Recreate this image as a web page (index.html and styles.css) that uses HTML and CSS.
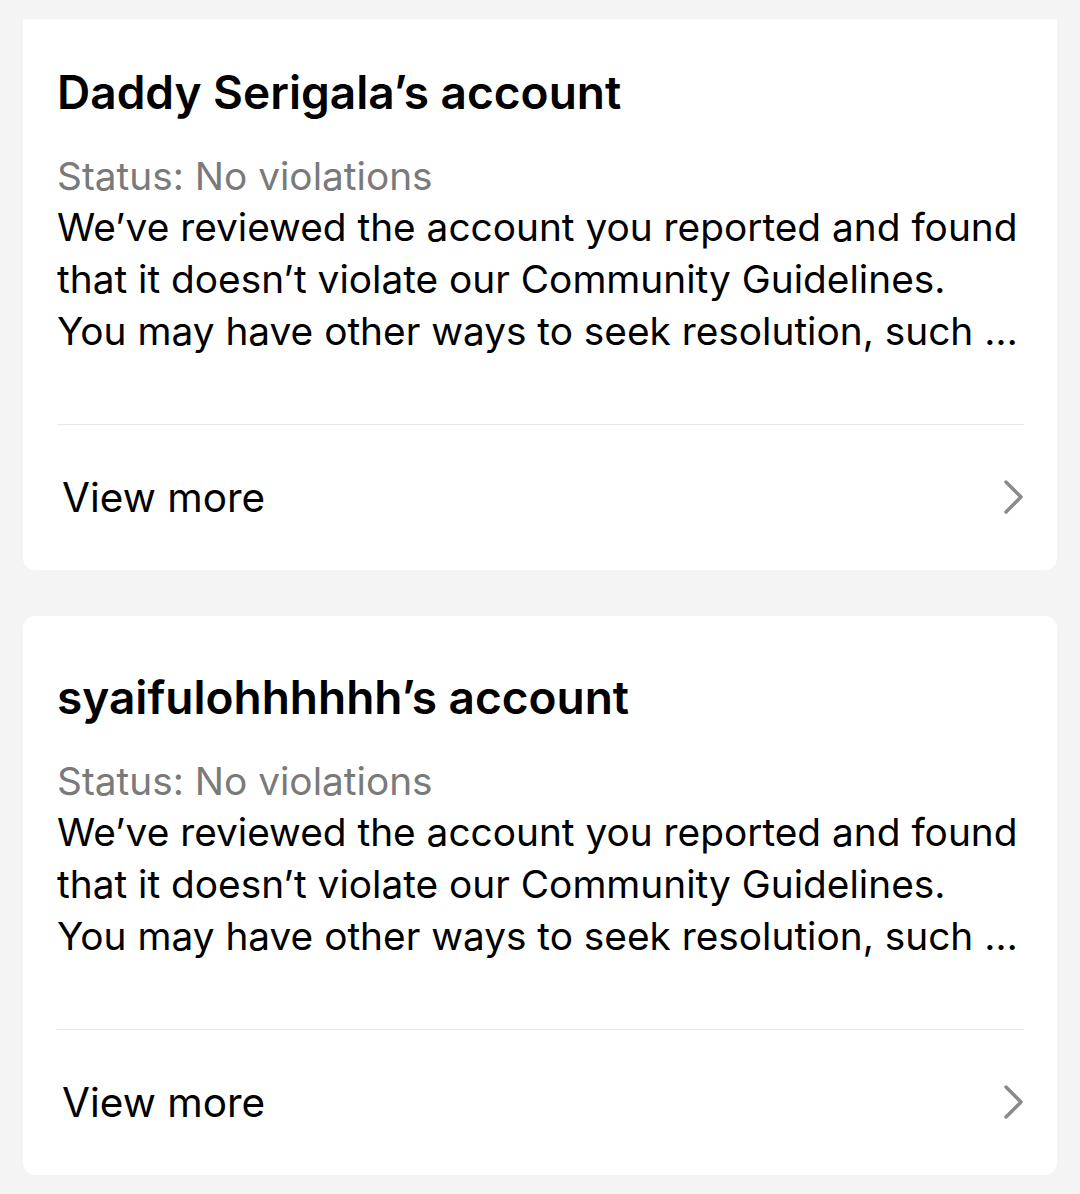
FILE: index.html
```html
<!DOCTYPE html>
<html lang="en">
<head>
    <meta charset="UTF-8">
    <meta name="viewport" content="width=device-width, initial-scale=1.0">
    <title>Reports</title>
    <link rel="stylesheet" href="styles.css">
</head>
<body>
    <div class="report-list">
        <div class="report-card report-card-cut">
            <h2 class="report-title">Daddy Serigala’s account</h2>
            <div class="report-status">Status: No violations</div>
            <p class="report-text">We’ve reviewed the account you reported and found that it doesn’t violate our Community Guidelines. You may have other ways to seek resolution, such …</p>
            <a class="report-more" href="#">
                <span>View more</span>
                <svg class="chevron" width="22" height="36" viewBox="0 0 22 36">
                    <polyline points="3,2 18,17 3,32" />
                </svg>
            </a>
        </div>

        <div class="report-card">
            <h2 class="report-title">syaifulohhhhhh’s account</h2>
            <div class="report-status">Status: No violations</div>
            <p class="report-text">We’ve reviewed the account you reported and found that it doesn’t violate our Community Guidelines. You may have other ways to seek resolution, such …</p>
            <a class="report-more" href="#">
                <span>View more</span>
                <svg class="chevron" width="22" height="36" viewBox="0 0 22 36">
                    <polyline points="3,2 18,17 3,32" />
                </svg>
            </a>
        </div>
    </div>
</body>
</html>
```

FILE: styles.css
```css
body {
    margin: 0;
    background: #f4f4f4;
    font-family: 'Inter', 'Liberation Sans', sans-serif;
    color: #000;
}

.report-list {
    display: flex;
    flex-direction: column;
    gap: 46px;
    padding: 19px 23px 19px 23px;
}

.report-card {
    background: #fff;
    border-radius: 12px;
    padding: 53px 33px 0 34px;
}

/* first card is scrolled partly under the header */
.report-card-cut {
    border-radius: 0 0 12px 12px;
    padding-top: 45px;
}

.report-title {
    margin: 0;
    font-size: 46px;
    line-height: 56px;
    font-weight: 600;
}

.report-status {
    margin-top: 31px;
    font-size: 38.8px;
    line-height: 50px;
    color: #7a7a7a;
}

.report-text {
    margin: 0;
    padding-right: 3px;
    font-size: 38.8px;
    line-height: 52px;
    color: #000;
}

.report-more {
    display: flex;
    align-items: center;
    justify-content: space-between;
    height: 145px;
    margin-top: 67px;
    padding-left: 5px;
    border-top: 1.5px solid #e6e6e6;
    font-size: 40.5px;
    color: #000;
    text-decoration: none;
}

.chevron {
    margin-right: -1px;
}

.chevron polyline {
    fill: none;
    stroke: #8a8a8a;
    stroke-width: 3.5;
    stroke-linecap: round;
    stroke-linejoin: round;
}
```
